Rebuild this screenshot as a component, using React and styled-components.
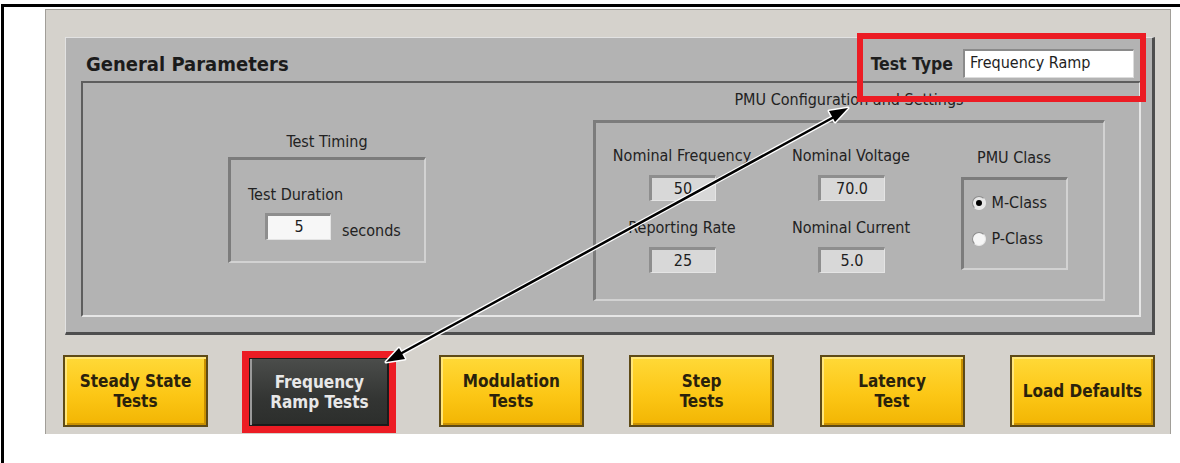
import React from 'react'
import styled, { createGlobalStyle, css } from 'styled-components'

const GlobalStyle = createGlobalStyle`
  body {
    margin: 0;
    background: #fff;
    font-family: "DejaVu Sans Condensed", "DejaVu Sans", sans-serif;
    color: #1e1e1e;
  }
  * { box-sizing: border-box; }
`

const sunken = css`
  border-style: solid;
  border-width: 3px 2px 2px 3px;
  border-color: #7c7c7c #d2d2d2 #d2d2d2 #7c7c7c;
`

const Page = styled.div`
  position: relative;
  width: 1180px;
  height: 463px;
  overflow: hidden;
  padding: 4px 0 0 1px;
`

const Frame = styled.div`
  height: 100%;
  border-top: 3px solid #000;
  border-left: 3px solid #000;
  padding: 2px 0 0 41px;
`

const Screen = styled.div`
  width: 1126px;
  height: 425px;
  background: #d5d2cc;
  border: 1px solid #a19e98;
  border-bottom: none;
  padding-top: 27px;
`

const Panel = styled.div`
  width: 1090px;
  height: 298px;
  margin-left: 19px;
  background: #b3b3b3;
  border-style: solid;
  border-width: 1px 3px 3px 1px;
  border-color: #e2e2e2 #4e4e4e #4e4e4e #e2e2e2;
`

const Header = styled.div`
  position: relative;
  height: 43px;
  padding: 8px 18px 0 20px;
  display: flex;
  align-items: center;
  justify-content: space-between;
`

const Title = styled.h2`
  margin: 0;
  font-size: 20px;
  font-weight: bold;
  color: #1b1b1b;
`

const TypeField = styled.div`
  display: flex;
  align-items: center;
  gap: 10px;
`

const TypeLabel = styled.span`
  font-size: 17.5px;
  font-weight: bold;
`

const TypeInput = styled.div`
  width: 171px;
  height: 29px;
  background: #fff;
  border-style: solid;
  border-width: 2px 1px 1px 2px;
  border-color: #8a8a8a #dcdcdc #dcdcdc #8a8a8a;
  padding-left: 5px;
  font-size: 16px;
  line-height: 24px;
`

const RedBox = styled.div`
  position: absolute;
  left: 791px;
  top: -5px;
  width: 289px;
  height: 69px;
  border: 6px solid #ec1c24;
`

const Sunken = styled.div`
  height: 236px;
  margin: 0 11px 0 15px;
  border-style: solid;
  border-width: 2px;
  border-color: #5e5e5e #e6e6e6 #e6e6e6 #5e5e5e;
  display: flex;
  align-items: flex-start;
`

const Group = styled.div`
  display: flex;
  flex-direction: column;
  align-items: center;
  margin-left: ${p => p.$left}px;
  margin-top: ${p => p.$top}px;
`

const Label = styled.div`
  font-size: 16px;
  line-height: 18px;
  white-space: nowrap;
  color: #222;
`

const GroupBox = styled.div`
  ${sunken};
  width: ${p => p.$w}px;
  height: ${p => p.$h}px;
  margin-top: ${p => p.$gap}px;
`

const TimingBody = styled.div`
  padding: 26px 0 0 17px;
`

const DurationRow = styled.div`
  display: flex;
  align-items: flex-end;
  gap: 11px;
  margin: 9px 0 0 34px;
`

const ValueBox = styled.div`
  width: ${p => p.$w || 67}px;
  height: ${p => p.$h || 26}px;
  background: ${p => (p.$light ? '#f7f7f7' : '#d8d8d8')};
  border-style: solid;
  border-width: 3px 1px 1px 3px;
  border-color: #8e8e8e #e4e4e4 #e4e4e4 #8e8e8e;
  text-align: center;
  font-size: 16px;
  line-height: 21px;
  color: #1e1e1e;
`

const PmuBody = styled.div`
  display: flex;
  padding-left: 4px;
`

const Column = styled.div`
  width: ${p => p.$w}px;
  display: flex;
  flex-direction: column;
  align-items: center;
  padding-top: ${p => p.$pt}px;
`

const FieldInput = styled(ValueBox)`
  margin: 10px 0 18px;
`

const RadioBox = styled.div`
  ${sunken};
  width: 107px;
  height: 93px;
  margin-top: 10px;
  padding: 14px 0 0 8px;
  display: flex;
  flex-direction: column;
  gap: 18px;
`

const RadioRow = styled.div`
  display: flex;
  align-items: center;
  gap: 6px;
  font-size: 16px;
  line-height: 18px;
`

const RadioDot = styled.span`
  width: 14px;
  height: 14px;
  border-radius: 50%;
  background: ${p => (p.$on ? '#e8e8e8' : '#f6f6f6')};
  border: 1px solid #8c8c8c;
  border-right-color: #e8e8e8;
  border-bottom-color: #e8e8e8;
  display: flex;
  align-items: center;
  justify-content: center;
  &::after {
    content: '';
    width: 6px;
    height: 6px;
    border-radius: 50%;
    background: ${p => (p.$on ? '#000' : 'transparent')};
  }
`

const ButtonRow = styled.div`
  width: 1092px;
  margin: 20px 0 0 17px;
  display: flex;
  justify-content: space-between;
  align-items: flex-start;
`

const TestButton = styled.div`
  width: 145px;
  height: 72px;
  display: flex;
  align-items: center;
  justify-content: center;
  text-align: center;
  font-size: 17px;
  font-weight: bold;
  line-height: 20px;
  color: #2a220c;
  background: linear-gradient(#ffd938, #fcc716 55%, #f2b503);
  border: 2px solid #5e4a16;
  box-shadow: inset 2px 2px 0 #ffe67a, inset -2px -2px 0 #c99000;
  ${p =>
    p.$active &&
    css`
      width: 140px;
      height: 68px;
      margin: 3px 4px 0 -4px;
      color: #e8e8e8;
      background: linear-gradient(#4b4d4b, #333533 60%, #2c2e2c);
      border: 1px solid #1c1c1c;
      box-shadow: inset 2px 0 0 #9a9a9a, inset -1px -1px 0 #1a1a1a;
      outline: 7px solid #ec1c24;
    `}
`

const Overlay = styled.svg`
  position: absolute;
  left: 0;
  top: 0;
  pointer-events: none;
`

const buttons = [
  ['Steady State', 'Tests'],
  ['Frequency', 'Ramp Tests'],
  ['Modulation', 'Tests'],
  ['Step', 'Tests'],
  ['Latency', 'Test'],
  ['Load Defaults'],
]

const Arrow = () => (
  <Overlay width="1180" height="463">
    <g stroke="#fff" strokeWidth="5" fill="#fff" strokeLinejoin="round">
      <line x1="834" y1="117" x2="400" y2="354" />
      <polygon points="848,108 835,122 829,111" strokeWidth="3" />
      <polygon points="386,362 399,348 405,359" strokeWidth="3" />
    </g>
    <g fill="#000">
      <line x1="834" y1="117" x2="400" y2="354" stroke="#000" strokeWidth="2.5" />
      <polygon points="848,108 835,122 829,111" />
      <polygon points="386,362 399,348 405,359" />
    </g>
  </Overlay>
)

const Field = ({ label, value }) => (
  <>
    <Label>{label}</Label>
    <FieldInput>{value}</FieldInput>
  </>
)

export default function App() {
  return (
    <Page>
      <GlobalStyle />
      <Frame>
        <Screen>
          <Panel>
            <Header>
              <Title>General Parameters</Title>
              <TypeField>
                <TypeLabel>Test Type</TypeLabel>
                <TypeInput>Frequency Ramp</TypeInput>
              </TypeField>
              <RedBox />
            </Header>
            <Sunken>
              <Group $left={145} $top={50}>
                <Label>Test Timing</Label>
                <GroupBox $w={198} $h={106} $gap={6}>
                  <TimingBody>
                    <Label>Test Duration</Label>
                  </TimingBody>
                  <DurationRow>
                    <ValueBox $light $w={66} $h={27}>5</ValueBox>
                    <Label>seconds</Label>
                  </DurationRow>
                </GroupBox>
              </Group>
              <Group $left={167} $top={8}>
                <Label>PMU Configuration and Settings</Label>
                <GroupBox $w={512} $h={181} $gap={11}>
                  <PmuBody>
                    <Column $w={164} $pt={24}>
                      <Field label="Nominal Frequency" value="50" />
                      <Field label="Reporting Rate" value="25" />
                    </Column>
                    <Column $w={174} $pt={24}>
                      <Field label="Nominal Voltage" value="70.0" />
                      <Field label="Nominal Current" value="5.0" />
                    </Column>
                    <Column $w={152} $pt={26}>
                      <Label>PMU Class</Label>
                      <RadioBox>
                        <RadioRow><RadioDot $on />M-Class</RadioRow>
                        <RadioRow><RadioDot />P-Class</RadioRow>
                      </RadioBox>
                    </Column>
                  </PmuBody>
                </GroupBox>
              </Group>
            </Sunken>
          </Panel>
          <ButtonRow>
            {buttons.map((lines, i) => (
              <TestButton key={i} $active={i === 1}>
                <span>
                  {lines.map((l, j) => (
                    <React.Fragment key={j}>
                      {j > 0 && <br />}
                      {l}
                    </React.Fragment>
                  ))}
                </span>
              </TestButton>
            ))}
          </ButtonRow>
        </Screen>
      </Frame>
      <Arrow />
    </Page>
  )
}
